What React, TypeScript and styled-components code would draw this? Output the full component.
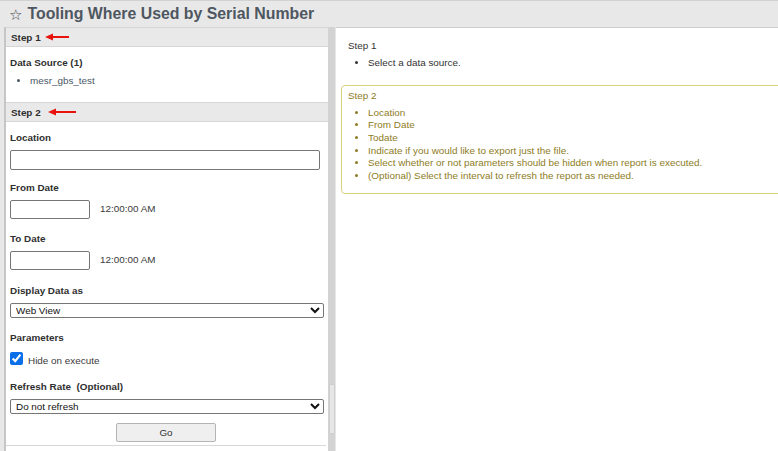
import React from "react";
import styled, { createGlobalStyle } from "styled-components";

const GlobalStyle = createGlobalStyle`
  html, body { margin: 0; padding: 0; }
  body {
    background: #e8e8e8;
    font-family: "Liberation Sans", Arial, sans-serif;
    width: 778px;
    height: 451px;
    overflow: hidden;
  }
`;

const Page = styled.div`
  display: flex;
  flex-direction: column;
  width: 778px;
  height: 451px;
  box-sizing: border-box;
  border-top: 1px solid #d2d2d2;
`;

const TitleBar = styled.header`
  height: 26px;
  display: flex;
  align-items: center;
  padding-left: 9px;
  gap: 5px;
`;

const Star = styled.span`
  font-family: "DejaVu Sans", sans-serif;
  font-size: 15px;
  line-height: 1;
  color: #3f454b;
  margin-top: 2px;
`;

const Title = styled.h1`
  margin: 0;
  font-size: 15.85px;
  font-weight: bold;
  color: #4e5761;
`;

const Body = styled.div`
  flex: 1;
  display: flex;
  padding-left: 4px;
  min-height: 0;
`;

const LeftPanel = styled.section`
  width: 322px;
  background: #fff;
  border-left: 2px solid #c6c6c6;
  display: flex;
  flex-direction: column;
  overflow: hidden;
`;

const StepHeader = styled.div`
  height: 18px;
  flex-shrink: 0;
  background: #e9e9e9;
  border-top: 1px solid #d6d6d6;
  border-bottom: 1px solid #d6d6d6;
  display: flex;
  align-items: center;
  padding-left: 5px;
  font-size: 9.9px;
  font-weight: bold;
  color: #2e2e2e;
`;

const ArrowSvg = styled.svg<{ $offset: number }>`
  margin-left: ${(p) => p.$offset}px;
  display: block;
`;

const Arrow = ({ offset, length }: { offset: number; length: number }) => (
  <ArrowSvg $offset={offset} width={length} height={8} viewBox={`0 0 ${length} 8`}>
    <polygon points="0,4 8,0.5 8,7.5" fill="#e8130f" />
    <line x1={6} y1={4} x2={length} y2={4} stroke="#e8130f" strokeWidth={2} />
  </ArrowSvg>
);

const Section = styled.div<{ $pt: number; $pb: number }>`
  padding: ${(p) => p.$pt}px 4px ${(p) => p.$pb}px 4px;
  display: flex;
  flex-direction: column;
`;

const Label = styled.div`
  font-size: 9.9px;
  font-weight: bold;
  line-height: 14px;
  color: #2f2f2f;
`;

const SourceList = styled.ul`
  margin: 4px 0 0 0;
  padding-left: 20px;
  font-size: 9.9px;
  line-height: 14px;
  color: #4a5866;
`;

const Field = styled.div<{ $gap: number }>`
  display: flex;
  flex-direction: column;
  margin-top: ${(p) => p.$gap}px;
`;

const TextInput = styled.input<{ $w: number; $h: number }>`
  box-sizing: border-box;
  width: ${(p) => p.$w}px;
  height: ${(p) => p.$h}px;
  margin: 5px 0 0 0;
  border: 1px solid #767676;
  border-radius: 2px;
  padding: 0 3px;
  font-family: "Liberation Sans", Arial, sans-serif;
  font-size: 9.9px;
  background: #fff;
`;

const DateRow = styled.div`
  display: flex;
  align-items: flex-end;
  gap: 10px;
`;

const TimeText = styled.span`
  font-size: 9.9px;
  line-height: 14px;
  color: #3a3a3a;
  padding-bottom: 3px;
`;

const Select = styled.select<{ $mt: number }>`
  box-sizing: border-box;
  width: 314px;
  height: 15px;
  margin: ${(p) => p.$mt}px 0 0 0;
  border: 1px solid #767676;
  border-radius: 2px;
  padding: 0 1px;
  font-family: "Liberation Sans", Arial, sans-serif;
  font-size: 9.9px;
  color: #111;
  background: #fff;
`;

const CheckRow = styled.label`
  display: flex;
  align-items: center;
  gap: 5px;
  margin-top: 5px;
  height: 16px;
`;

const Check = styled.input`
  width: 13px;
  height: 13px;
  margin: 0;
  accent-color: #0a6fe8;
`;

const CheckText = styled.span`
  font-size: 9.9px;
  color: #3a3a3a;
  padding-top: 5px;
`;

const ButtonRow = styled.div`
  display: flex;
  justify-content: center;
  padding: 9px 0 3px 0;
  margin-right: 2px;
  border-bottom: 1px solid #d8d8d8;
`;

const GoButton = styled.button`
  width: 100px;
  height: 19px;
  box-sizing: border-box;
  background: #efefef;
  border: 1px solid #b4b4b4;
  border-radius: 2px;
  font-family: "Liberation Sans", Arial, sans-serif;
  font-size: 9.9px;
  color: #333;
  padding: 0;
`;

const Splitter = styled.div`
  width: 7px;
  flex-shrink: 0;
  background: #d3d3d3;
  border-right: 1px solid #e6e6e6;
  display: flex;
  justify-content: center;
`;

const SplitHandle = styled.div`
  width: 4px;
  height: 48px;
  margin-top: 357px;
  background: #e6e6e6;
  border: 1px solid #cdcdcd;
  border-radius: 1px;
`;

const RightPanel = styled.section`
  flex: 1;
  background: #fff;
  border-top: 1px solid #cdcdcd;
  padding: 7px 0 0 5px;
  overflow: hidden;
  display: flex;
  flex-direction: column;
  gap: 4px;
`;

const HelpBox = styled.div<{ $active?: boolean }>`
  margin-right: -10px;
  border: 1px solid ${(p) => (p.$active ? "#d9d47c" : "transparent")};
  border-radius: 4px;
  padding: 4px 6px 11px 6px;
  color: ${(p) => (p.$active ? "#8d7c25" : "#333")};
  font-size: 9.9px;
  line-height: 12.6px;
`;

const HelpTitle = styled.div``;

const HelpList = styled.ul`
  margin: 4px 0 0 0;
  padding-left: 20px;
`;

export default function App() {
  return (
    <>
      <GlobalStyle />
      <Page>
        <TitleBar>
          <Star>☆</Star>
          <Title>Tooling Where Used by Serial Number</Title>
        </TitleBar>
        <Body>
          <LeftPanel>
            <StepHeader>
              Step 1
              <Arrow offset={4} length={24} />
            </StepHeader>
            <Section $pt={9} $pb={14}>
              <Label>Data Source (1)</Label>
              <SourceList>
                <li>mesr_gbs_test</li>
              </SourceList>
            </Section>
            <StepHeader>
              Step 2
              <Arrow offset={7} length={28} />
            </StepHeader>
            <Section $pt={9} $pb={0}>
              <Field $gap={0}>
                <Label>Location</Label>
                <TextInput type="text" $w={310} $h={20} />
              </Field>
              <Field $gap={11}>
                <Label>From Date</Label>
                <DateRow>
                  <TextInput type="text" $w={80} $h={19} />
                  <TimeText>12:00:00 AM</TimeText>
                </DateRow>
              </Field>
              <Field $gap={13}>
                <Label>To Date</Label>
                <DateRow>
                  <TextInput type="text" $w={80} $h={19} />
                  <TimeText>12:00:00 AM</TimeText>
                </DateRow>
              </Field>
              <Field $gap={14}>
                <Label>Display Data as</Label>
                <Select $mt={5} defaultValue="web">
                  <option value="web">Web View</option>
                  <option value="file">Export File</option>
                </Select>
              </Field>
              <Field $gap={13}>
                <Label>Parameters</Label>
                <CheckRow>
                  <Check type="checkbox" defaultChecked />
                  <CheckText>Hide on execute</CheckText>
                </CheckRow>
              </Field>
              <Field $gap={14}>
                <Label>Refresh Rate&nbsp; (Optional)</Label>
                <Select $mt={5} defaultValue="none">
                  <option value="none">Do not refresh</option>
                  <option value="1">Every minute</option>
                </Select>
              </Field>
            </Section>
            <ButtonRow>
              <GoButton type="button">Go</GoButton>
            </ButtonRow>
          </LeftPanel>
          <Splitter>
            <SplitHandle />
          </Splitter>
          <RightPanel>
            <HelpBox>
              <HelpTitle>Step 1</HelpTitle>
              <HelpList>
                <li>Select a data source.</li>
              </HelpList>
            </HelpBox>
            <HelpBox $active>
              <HelpTitle>Step 2</HelpTitle>
              <HelpList>
                <li>Location</li>
                <li>From Date</li>
                <li>Todate</li>
                <li>Indicate if you would like to export just the file.</li>
                <li>Select whether or not parameters should be hidden when report is executed.</li>
                <li>(Optional) Select the interval to refresh the report as needed.</li>
              </HelpList>
            </HelpBox>
          </RightPanel>
        </Body>
      </Page>
    </>
  );
}
